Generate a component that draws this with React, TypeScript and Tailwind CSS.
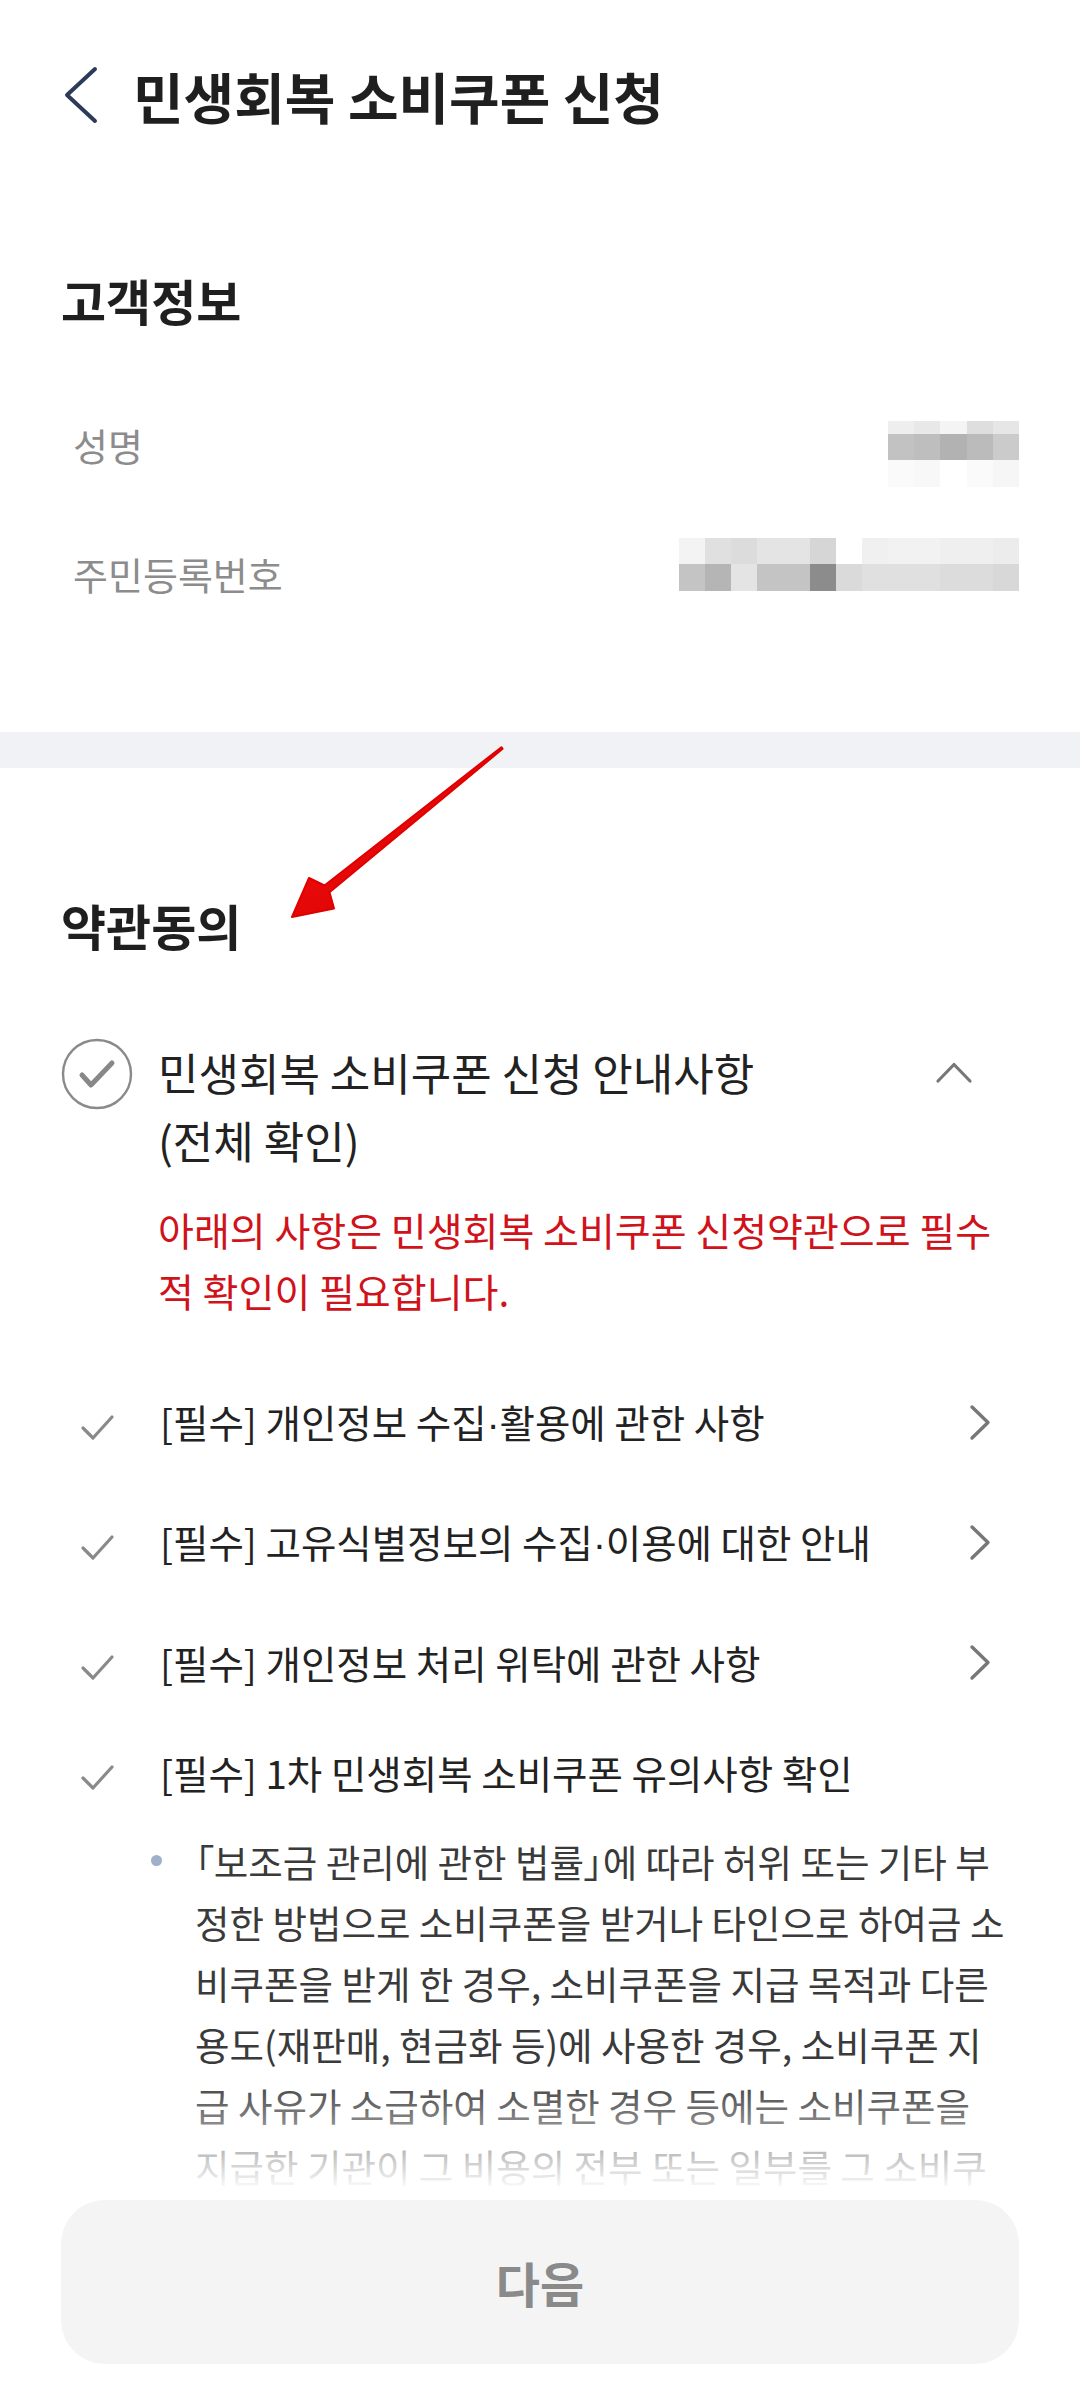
import React from 'react';

const nameCells = [
  ['#eeeeee', '#e8e8e8', '#f4f4f4', '#dedede', '#e6e6e6'],
  ['#c2c2c2', '#bebebe', '#b2b2b2', '#bbbbbb', '#cbcbcb'],
  ['#fafafa', '#f8f8f8', '#ffffff', '#fafafa', '#f6f6f6'],
];
const nameRowHeights = [13, 26, 27];

const idCells = [
  ['#f3f3f3', '#e0e0e0', '#dcdcdc', '#e4e4e4', '#e4e4e4', '#d6d6d6', '#ffffff', '#f0f0f0', '#f2f2f2', '#f2f2f2', '#efefef', '#efefef', '#ececec'],
  ['#c4c4c4', '#b5b5b5', '#e4e4e4', '#c4c4c4', '#c4c4c4', '#8c8c8c', '#dadada', '#e0e0e0', '#e0e0e0', '#e0e0e0', '#dcdcdc', '#dcdcdc', '#d8d8d8'],
];
const idRowHeights = [26, 27];

const terms = [
  { label: '[필수] 개인정보 수집·활용에 관한 사항', more: true },
  { label: '[필수] 고유식별정보의 수집·이용에 대한 안내', more: true },
  { label: '[필수] 개인정보 처리 위탁에 관한 사항', more: true },
  { label: '[필수] 1차 민생회복 소비쿠폰 유의사항 확인', more: false },
];

const noticeLines = [
  '정한 방법으로 소비쿠폰을 받거나 타인으로 하여금 소',
  '비쿠폰을 받게 한 경우, 소비쿠폰을 지급 목적과 다른',
  '용도(재판매, 현금화 등)에 사용한 경우, 소비쿠폰 지',
  '급 사유가 소급하여 소멸한 경우 등에는 소비쿠폰을',
  '지급한 기관이 그 비용의 전부 또는 일부를 그 소비쿠',
  '폰을 지급받은 자로부터 환수할 수 있습니다.',
];

// the CJK middle dot is full width in Noto, the app uses a narrow one
const withNarrowDot = (text: string) =>
  text.split('·').map((part, i) => (
    <React.Fragment key={i}>
      {i > 0 && <span className="font-['Liberation_Sans',sans-serif]">·</span>}
      {part}
    </React.Fragment>
  ));

const Mosaic: React.FC<{ cells: string[][]; heights: number[] }> = ({ cells, heights }) => (
  <div className="flex flex-col">
    {cells.map((row, r) => (
      <div key={r} className="flex">
        {row.map((c, i) => (
          <div key={i} className="w-[26.2px]" style={{ backgroundColor: c, height: heights[r] }} />
        ))}
      </div>
    ))}
  </div>
);

const SmallCheck = () => (
  <svg width="36" height="36" viewBox="0 0 36 36" fill="none">
    <polyline points="4,23 14,33 33,12" stroke="#8a8a8a" strokeWidth="3.2" strokeLinecap="round" strokeLinejoin="round" />
  </svg>
);

const ChevronRight = () => (
  <svg width="30" height="40" viewBox="0 0 30 40" fill="none">
    <polyline points="7,4 23,19.5 7,35" stroke="#777777" strokeWidth="3.4" strokeLinecap="round" strokeLinejoin="round" />
  </svg>
);

export default function App() {
  return (
    <div className="relative h-[2402px] w-full overflow-hidden bg-white font-['Noto_Sans_CJK_KR','Noto_Sans',sans-serif] text-[#222222]">
      {/* header */}
      <header className="flex h-[190px] items-center pl-[62px]">
        <svg width="40" height="60" viewBox="0 0 40 60" fill="none">
          <polyline points="33,4 5,30 33,56" stroke="#2c3b5a" strokeWidth="4" strokeLinecap="round" strokeLinejoin="round" />
        </svg>
        <h1 className="ml-[31px] text-[55px] font-bold leading-none text-[#1f1f1f]">민생회복 소비쿠폰 신청</h1>
      </header>

      {/* customer info */}
      <section className="px-[61px] pt-[80px] pb-[94px]">
        <h2 className="text-[49px] font-bold leading-[60px] text-[#1f1f1f]">고객정보</h2>
        <div className="mt-[50px]">
          <div className="flex h-[129px] items-center justify-between">
            <span className="pl-[12px] text-[38px] text-[#8c8c8c]">성명</span>
            <div className="mt-[18px]">
              <Mosaic cells={nameCells} heights={nameRowHeights} />
            </div>
          </div>
          <div className="flex h-[129px] items-center justify-between">
            <span className="pl-[12px] text-[38px] text-[#8c8c8c]">주민등록번호</span>
            <div className="mb-[18px]">
              <Mosaic cells={idCells} heights={idRowHeights} />
            </div>
          </div>
        </div>
      </section>

      <div className="h-[36px] bg-[#f1f2f6]" />

      {/* terms */}
      <section className="px-[61px] pt-[127px]">
        <h2 className="text-[49px] font-bold leading-[60px] text-[#1f1f1f]">약관동의</h2>

        <div className="mt-[83px] flex items-start">
          <svg width="72" height="72" viewBox="0 0 72 72" fill="none" className="shrink-0">
            <circle cx="36" cy="36" r="34" stroke="#8a8a8a" strokeWidth="2.4" />
            <polyline points="21,37 30,47 51,25" stroke="#888888" strokeWidth="5" strokeLinecap="round" strokeLinejoin="round" />
          </svg>
          <p className="ml-[25px] flex-1 text-[44px] leading-[68px] text-[#222222]">
            민생회복 소비쿠폰 신청 안내사항
            <br />
            (전체 확인)
          </p>
          <div className="mr-[45px] flex h-[68px] items-center">
            <svg width="40" height="40" viewBox="0 0 40 40" fill="none">
              <polyline points="4,29 20,12.5 36,29" stroke="#777777" strokeWidth="3.2" strokeLinecap="round" strokeLinejoin="round" />
            </svg>
          </div>
        </div>

        <p className="mt-[25px] pl-[97px] text-[39px] leading-[61px] whitespace-nowrap text-[#d0121b]">
          아래의 사항은 민생회복 소비쿠폰 신청약관으로 필수
          <br />
          적 확인이 필요합니다.
        </p>

        <ul className="mt-[42px]">
          {terms.map((t, i) => (
            <li key={i} className={`flex items-center ${t.more ? 'h-[120px]' : 'h-[100px]'}`}>
              <div className="ml-[18px] shrink-0">
                <SmallCheck />
              </div>
              <span className="ml-[45px] flex-1 text-[38.5px] whitespace-nowrap text-[#222222]">{withNarrowDot(t.label)}</span>
              {t.more && (
                <div className="mr-[24px]">
                  <ChevronRight />
                </div>
              )}
            </li>
          ))}
        </ul>

        <div className="mt-[7px] flex pl-[90px]">
          <div className="flex h-[61px] shrink-0 items-center">
            <span className="block h-[11px] w-[11px] rounded-full bg-[#9fb0c8]" />
          </div>
          <p className="ml-[33px] text-[37.5px] leading-[61px] whitespace-nowrap text-[#3a3a3a]">
            <span className="[font-feature-settings:'palt']">「</span>보조금 관리에 관한 법률
            <span className="[font-feature-settings:'palt']">」</span>에 따라 허위 또는 기타 부
            {noticeLines.map((l, i) => (
              <React.Fragment key={i}>
                <br />
                {l}
              </React.Fragment>
            ))}
          </p>
        </div>
      </section>

      {/* annotation arrow */}
      <svg className="pointer-events-none absolute left-0 top-0" width="1080" height="1000" viewBox="0 0 1080 1000" fill="none">
        <defs>
          <linearGradient id="arrowRed" x1="0" y1="0" x2="1" y2="1">
            <stop offset="0" stopColor="#ff1010" />
            <stop offset="1" stopColor="#cc0000" />
          </linearGradient>
        </defs>
        <polygon
          points="501.4,747.2 324.5,885.5 309,878 292,917 334,908.5 329.5,892.3 502.6,748.8"
          fill="url(#arrowRed)"
          stroke="#e00000"
          strokeWidth="2"
          strokeLinejoin="round"
        />
      </svg>

      {/* bottom button */}
      <div className="absolute bottom-0 left-0 right-0">
        <div className="h-[112px] bg-linear-to-b from-white/0 to-white" />
        <div className="bg-white px-[61px] pt-[10px] pb-[38px]">
          <button className="flex h-[164px] w-full items-center justify-center rounded-[44px] bg-[#f4f4f4] text-[48px] font-bold text-[#8a8a8a]">
            다음
          </button>
        </div>
      </div>
    </div>
  );
}
